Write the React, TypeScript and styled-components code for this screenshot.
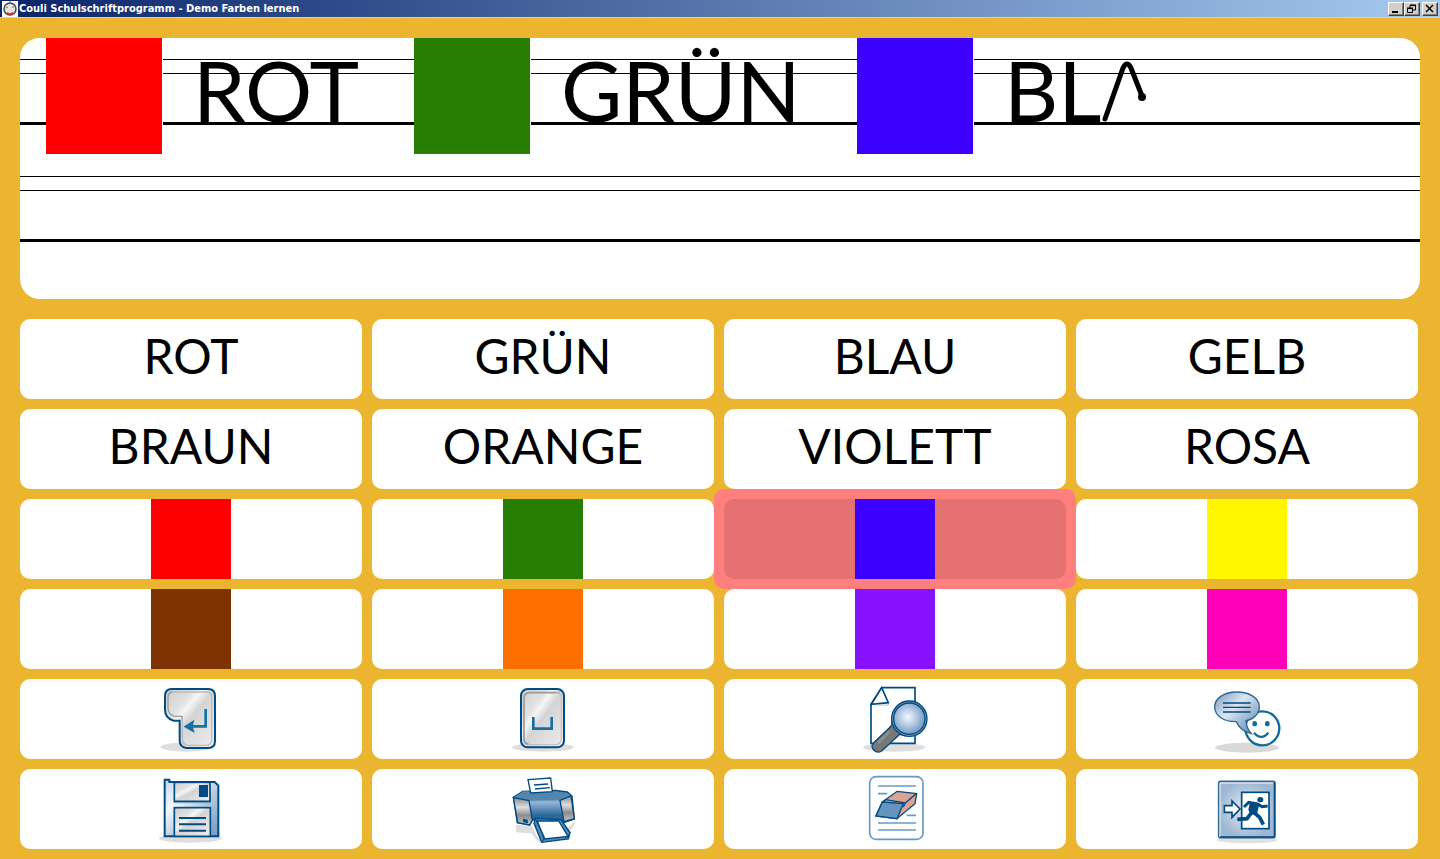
import React from "react";
import styled, { createGlobalStyle, css } from "styled-components";

const GlobalStyle = createGlobalStyle`
  * { box-sizing: border-box; }
  body { margin: 0; background: #ecb530; font-family: Lato, "Liberation Sans", sans-serif; color: #000; }
  button { font: inherit; color: inherit; }
`;

const Window = styled.div`
  min-height: 100vh;
  background: #ecb530;
`;

const TitleBar = styled.header`
  display: flex;
  align-items: center;
  height: 18px;
  padding: 0 2px;
  border-bottom: 1px solid #d4d0c8;
  background: linear-gradient(to right, #0a246a, #a6caf0);
`;

const Title = styled.h1`
  flex: 1;
  margin: 0 0 0 1px;
  font: bold 11px/16px "DejaVu Sans Condensed", "DejaVu Sans", sans-serif;
  color: #fff;
  white-space: nowrap;
`;

const WindowButton = styled.button<{ $apart?: boolean }>`
  display: block;
  width: 16px;
  height: 14px;
  margin: 0 0 0 ${(p) => (p.$apart ? 2 : 0)}px;
  padding: 0;
  border: 1px solid;
  border-color: #fff #404040 #404040 #fff;
  background: #d4d0c8;
  box-shadow: inset -1px -1px 0 #808080;
  svg { display: block; }
`;

const Pad = styled.section`
  height: 261px;
  margin: 20px 20px 0;
  border-radius: 20px;
  background: #fff;
  overflow: hidden;
`;

const RuledLine = styled.div`
  display: flex;
  align-items: flex-start;
  height: 117px;
  padding-left: 26px;
  background: linear-gradient(
    #fff 21px, #000 21px, #000 22px, #fff 22px, #fff 35px,
    #000 35px, #000 36px, #fff 36px, #fff 84px,
    #000 84px, #000 87px, #fff 87px
  );
`;

const PadSwatch = styled.span<{ $color: string }>`
  flex: none;
  width: 117px;
  height: 116px;
  border-right: 1px solid #fff;
  background: ${(p) => p.$color};
`;

const Word = styled.span<{ $width?: number }>`
  display: flex;
  flex: none;
  width: ${(p) => (p.$width ? p.$width + "px" : "auto")};
  padding-left: 30px;
  font-size: 84px;
  line-height: 104px;
  white-space: nowrap;
`;

const PenStroke = styled.svg`
  display: block;
  width: 50px;
  height: 116px;
`;

const Keyboard = styled.main`
  display: grid;
  grid-template-columns: repeat(4, 1fr);
  grid-auto-rows: 80px;
  gap: 10px;
  padding: 20px 22px 10px 20px;
`;

const Key = styled.button<{ $active?: boolean }>`
  display: block;
  padding: 0;
  border: 0;
  border-radius: 10px;
  background: none;
  ${(p) =>
    p.$active &&
    css`
      position: relative;
      margin: -10px;
      padding: 10px;
      background: #ff7f7f;
    `}
`;

const Face = styled.span<{ $active?: boolean }>`
  display: flex;
  align-items: center;
  justify-content: center;
  height: 80px;
  border-radius: 10px;
  background: ${(p) => (p.$active ? "#e57272" : "#fff")};
  overflow: hidden;
`;

const KeyText = styled.span`
  padding-bottom: 6px;
  font-size: 48px;
  line-height: 74px;
`;

const Swatch = styled.span<{ $color: string }>`
  width: 80px;
  height: 80px;
  background: ${(p) => p.$color};
`;

const Art = styled.svg`
  display: block;
  width: 100px;
  height: 80px;
`;

const words = ["ROT", "GRÜN", "BLAU", "GELB", "BRAUN", "ORANGE", "VIOLETT", "ROSA"];

const colors = [
  { name: "Rot", value: "#ff0000" },
  { name: "Grün", value: "#267f00" },
  { name: "Blau", value: "#3b00ff", active: true },
  { name: "Gelb", value: "#fff600" },
  { name: "Braun", value: "#7f3300" },
  { name: "Orange", value: "#ff6f00" },
  { name: "Violett", value: "#8811ff" },
  { name: "Rosa", value: "#ff00b8" },
];

const BLUE = "#004b82";

const EnterIcon = () => (
  <Art viewBox="3 -3 300 240" aria-hidden="true">
    <ellipse cx="141" cy="201" rx="80" ry="14" fill="#dedede" />
    <path d="M93 27H205Q225 27 225 49V183Q225 204 203 204H139Q119 202 119 181V122H101Q75 116 75 88V49Q75 28 93 27Z" fill="url(#metal)" stroke={BLUE} strokeWidth="6" />
    <path d="M126 118V109H104Q85 105 84 84V53Q84 37 98 36" fill="none" stroke="#999" strokeWidth="4" />
    <path d="M98 36H203Q215 38 215 51V180Q213 195 201 196H143Q128 193 127 179V118" fill="none" stroke="#bbb" strokeWidth="4" />
    <path d="M197 87V139H145" fill="none" stroke="#1671a2" strokeWidth="8" />
    <path d="M135 140L160 124L156 139L161 155Z" fill="#1671a2" stroke="#1671a2" strokeWidth="4" />
  </Art>
);

const SpaceIcon = () => (
  <Art viewBox="3 -3 300 240" aria-hidden="true">
    <ellipse cx="153" cy="202" rx="93" ry="13" fill="#dedede" />
    <rect x="87" y="27" width="129" height="175" rx="20" fill="url(#metal)" stroke={BLUE} strokeWidth="6" />
    <path d="M204 38H112Q97 39 96 54V178Q97 191 110 193" fill="none" stroke="#999" strokeWidth="5" />
    <path d="M193 37Q208 38 208 53V176Q206 193 192 194H110" fill="none" stroke="#c3c3c3" strokeWidth="4" />
    <path d="M124 111V146H179V111" fill="none" stroke="#1671a2" strokeWidth="8" />
  </Art>
);

const SearchIcon = () => (
  <Art viewBox="-3 -3 300 240" aria-hidden="true">
    <ellipse cx="145" cy="202" rx="94" ry="13" fill="#dedede" />
    <path d="M107 23H207V190H75V73Z" fill="#fff" stroke={BLUE} strokeWidth="5" />
    <path d="M80 76L130 72L128 78Z" fill="#d4d4d4" />
    <path d="M107 23L127 68L76 73Z" fill="#fff" stroke={BLUE} strokeWidth="5" />
    <path d="M137 137L163 161L107 213Q91 222 80 206Q75 197 83 188Z" fill="#777" stroke={BLUE} strokeWidth="4" />
    <path d="M138 147L96 189" stroke="#8e8e8e" strokeWidth="8" />
    <path d="M140 123Q139 145 124 151Q148 167 166 162L180 168L166 143Z" fill="#777" />
    <path d="M137 118V133L126 150M147 176L161 164L181 167" fill="none" stroke={BLUE} strokeWidth="3" />
    <circle cx="190" cy="116" r="53" fill="#8ba3b6" stroke={BLUE} strokeWidth="4" />
    <circle cx="190" cy="116" r="47" fill="url(#lens)" stroke={BLUE} strokeWidth="4" />
  </Art>
);

const SpeakIcon = () => (
  <Art viewBox="3 -3 300 240" aria-hidden="true">
    <ellipse cx="153" cy="203" rx="96" ry="15" fill="#d9d9d9" />
    <circle cx="199" cy="145" r="51" fill="#fff" stroke="#116b9c" strokeWidth="7" />
    <ellipse cx="176" cy="131" rx="7" ry="8" fill="#116b9c" />
    <ellipse cx="214" cy="131" rx="7" ry="8" fill="#116b9c" />
    <path d="M174 158Q196 183 217 158" fill="none" stroke="#116b9c" strokeWidth="7" />
    <path d="M122 36C160 36 190 54 190 80C190 102 172 118 150 122Q151 144 166 161Q131 151 121 125C84 126 56 107 56 81C56 54 85 36 122 36Z" fill="url(#bubble)" stroke="#2e6891" strokeWidth="4" />
    <path d="M81 69H164M81 82H164M81 96H164" stroke={BLUE} strokeWidth="4" />
  </Art>
);

const SaveIcon = () => (
  <Art viewBox="3 -3 300 240" aria-hidden="true">
    <ellipse cx="151" cy="205" rx="95" ry="13" fill="#dedede" />
    <path d="M74 29H88V36H224L235 47V199H74Z" fill="url(#steel)" stroke={BLUE} strokeWidth="6" />
    <rect x="103" y="37" width="107" height="57" fill="url(#metal)" stroke={BLUE} strokeWidth="5" />
    <rect x="177" y="45" width="27" height="36" fill={BLUE} />
    <rect x="103" y="113" width="108" height="86" fill="url(#metal)" stroke={BLUE} strokeWidth="5" />
    <path d="M117 144H198M117 163H198M117 182H198" stroke={BLUE} strokeWidth="6" />
    <path d="M101 98H213" stroke="#6b9cc0" strokeWidth="3" />
  </Art>
);

const PrintIcon = () => (
  <Art viewBox="3 -3 300 240" aria-hidden="true">
    <path d="M72 164L120 168L134 197L151 219L138 215L118 190L72 187Z" fill="#dedede" />
    <path d="M244 157L251 160L232 186L226 176Z" fill="#dedede" />
    <path d="M64 82L92 64L190 61L226 66L240 78L247 147L218 157L121 149L113 165L76 158Z" fill="url(#body)" stroke={BLUE} strokeWidth="4" />
    <path d="M64 83L93 64L185 63L237 75L204 91L111 92Z" fill="#5286ad" />
    <path d="M108 29L176 24L181 65L116 69Z" fill="#fff" stroke={BLUE} strokeWidth="4" />
    <path d="M126 45L168 42M129 57L174 53" stroke={BLUE} strokeWidth="4" />
    <path d="M64 83L111 92L121 151L113 165L77 158Z" fill="url(#side)" stroke={BLUE} strokeWidth="4" />
    <path d="M204 91L237 78L247 146L216 155Z" fill="url(#side)" stroke={BLUE} strokeWidth="4" />
    <path d="M93 146L107 149L108 160L94 157Z" fill={BLUE} />
    <path d="M129 145L207 149L234 188L229 207L149 217L126 160Z" fill="#5389b5" stroke={BLUE} strokeWidth="4" />
    <path d="M136 153L200 153L228 199L157 207Z" fill="#fff" stroke={BLUE} strokeWidth="4" />
    <path d="M129 145L157 201L151 217M207 149L234 188L225 205" fill="none" stroke={BLUE} strokeWidth="3" />
  </Art>
);

const EraseIcon = () => (
  <Art viewBox="-3 -3 300 240" aria-hidden="true">
    <rect x="71" y="20" width="160" height="188" rx="19" fill="#fff" stroke="#6899c4" strokeWidth="5" />
    <path d="M96 48H210M96 71H124M182 136H210M96 159H210M96 180H210" stroke="#6899c4" strokeWidth="5" />
    <path d="M109 96L153 64L212 71L207 101L153 146L90 138Z" fill="#dfa394" stroke={BLUE} strokeWidth="4" />
    <path d="M109 96L172 101L153 146L90 138Z" fill="#6595bf" stroke={BLUE} strokeWidth="4" />
    <path d="M109 96L119 89L178 99L209 72M178 99L172 111" fill="none" stroke={BLUE} strokeWidth="4" />
  </Art>
);

const ExitIcon = () => (
  <Art viewBox="3 -3 300 240" aria-hidden="true">
    <ellipse cx="154" cy="210" rx="92" ry="10" fill="#e1e1e1" />
    <rect x="68" y="34" width="169" height="169" rx="6" fill="url(#steel2)" stroke="#33688f" strokeWidth="5" />
    <path d="M72 201V39H232" fill="none" stroke="#f4f7fa" strokeWidth="3" />
    <path d="M235 37V201H72" fill="none" stroke={BLUE} strokeWidth="4" />
    <rect x="137" y="67" width="82" height="109" fill="#fff" stroke={BLUE} strokeWidth="5" />
    <path d="M85 107H108V93L132 117L108 142V127H85Z" fill="#fff" stroke={BLUE} strokeWidth="5" />
    <ellipse cx="193" cy="89" rx="9" ry="8" fill={BLUE} />
    <path d="M144 111L158 97L184 102L198 110L215 108" fill="none" stroke={BLUE} strokeWidth="9" />
    <path d="M162 96L190 103L183 132L164 134L157 119Z" fill={BLUE} />
    <path d="M168 126L153 146L124 148M173 127L191 142L202 164" fill="none" stroke={BLUE} strokeWidth="11" />
  </Art>
);

const tools = [
  { label: "Zeilenumbruch", Icon: EnterIcon },
  { label: "Leerzeichen", Icon: SpaceIcon },
  { label: "Vorschau", Icon: SearchIcon },
  { label: "Vorlesen", Icon: SpeakIcon },
  { label: "Speichern", Icon: SaveIcon },
  { label: "Drucken", Icon: PrintIcon },
  { label: "Löschen", Icon: EraseIcon },
  { label: "Beenden", Icon: ExitIcon },
];

const GradientDefs = styled.svg`
  display: block;
  width: 0;
  height: 0;
`;

const Gradients = () => (
  <GradientDefs aria-hidden="true">
    <defs>
      <linearGradient id="metal" x1="0" y1="0" x2="1" y2="1">
        <stop offset="0" stopColor="#cecece" />
        <stop offset="0.3" stopColor="#e2e2e2" />
        <stop offset="0.38" stopColor="#f5f5f5" />
        <stop offset="0.5" stopColor="#d4d4d4" />
        <stop offset="1" stopColor="#eee" />
      </linearGradient>
      <radialGradient id="lens" cx="0.45" cy="0.45">
        <stop offset="0" stopColor="#f4f8fd" />
        <stop offset="0.45" stopColor="#c0d3e8" />
        <stop offset="1" stopColor="#7fa3c9" />
      </radialGradient>
      <linearGradient id="bubble" x1="0" y1="0" x2="1" y2="1">
        <stop offset="0" stopColor="#7396b9" />
        <stop offset="0.4" stopColor="#dce6f2" />
        <stop offset="1" stopColor="#4c7ca8" />
      </linearGradient>
      <linearGradient id="steel" x1="0" y1="0" x2="1" y2="1">
        <stop offset="0" stopColor="#c4d6e9" />
        <stop offset="0.3" stopColor="#f3f7fb" />
        <stop offset="0.6" stopColor="#b2c8de" />
        <stop offset="1" stopColor="#6f99c0" />
      </linearGradient>
      <radialGradient id="steel2">
        <stop offset="0" stopColor="#e4ecf5" />
        <stop offset="1" stopColor="#9fb8d2" />
      </radialGradient>
      <linearGradient id="body" x1="0" y1="0" x2="0" y2="1">
        <stop offset="0" stopColor="#3f79a7" />
        <stop offset="0.35" stopColor="#92b5d3" />
        <stop offset="0.7" stopColor="#2e6c9e" />
        <stop offset="1" stopColor="#1b5b8d" />
      </linearGradient>
      <linearGradient id="side" x1="0" y1="0" x2="0" y2="1">
        <stop offset="0" stopColor="#8a8a8a" />
        <stop offset="0.35" stopColor="#dedede" />
        <stop offset="0.65" stopColor="#8c8c8c" />
        <stop offset="1" stopColor="#c6c6c6" />
      </linearGradient>
    </defs>
  </GradientDefs>
);

const AppLogo = () => (
  <svg width="16" height="16" viewBox="0 0 16 16" aria-hidden="true">
    <path d="M0 0H16V16H0Z" fill="#fff" />
    <circle cx="8" cy="8" r="6" fill="#e5e5e5" stroke="#444" strokeWidth="1.500" />
    <path d="M7 1L9 1M4 7L6 6M10 6L12 6" stroke="#777" />
    <path d="M5 11Q8 13 11 11V13Q8 15 5 13Z" fill="#ef2b20" />
  </svg>
);

export default function App() {
  return (
    <Window>
      <GlobalStyle />
      <Gradients />
      <TitleBar>
        <AppLogo />
        <Title>Couli Schulschriftprogramm - Demo Farben lernen</Title>
        <WindowButton aria-label="Minimieren">
          <svg width="14" height="12"><path d="M3 8H9V10H3Z" /></svg>
        </WindowButton>
        <WindowButton aria-label="Wiederherstellen">
          <svg width="14" height="12" fill="none" stroke="#000">
            <path d="M5 5V2.500H10.500V7H8M5 2H11M2.500 5.500H7.500V9.500H2.500ZM2 5H8" />
          </svg>
        </WindowButton>
        <WindowButton aria-label="Schließen" $apart>
          <svg width="14" height="12"><path d="M3 2L10 9M10 2L3 9" stroke="#000" strokeWidth="1.500" /></svg>
        </WindowButton>
      </TitleBar>

      <Pad aria-label="Schreibfläche">
        <RuledLine>
          <PadSwatch $color="#ff0000" />
          <Word $width={251}>ROT</Word>
          <PadSwatch $color="#267f00" />
          <Word $width={326}>GRÜN</Word>
          <PadSwatch $color="#3b00ff" />
          <Word>BL</Word>
          <PenStroke viewBox="0 0 50 116" aria-hidden="true">
            <path d="M4 81L22 30Q26 22 30 30L41 58" fill="none" stroke="#000" strokeWidth="5" strokeLinecap="round" />
            <circle cx="41" cy="59" r="4" />
          </PenStroke>
        </RuledLine>
        <RuledLine />
      </Pad>

      <Keyboard>
        {words.map((word) => (
          <Key key={word}>
            <Face>
              <KeyText>{word}</KeyText>
            </Face>
          </Key>
        ))}
        {colors.map((color) => (
          <Key key={color.value} aria-label={color.name} $active={color.active}>
            <Face $active={color.active}>
              <Swatch $color={color.value} />
            </Face>
          </Key>
        ))}
        {tools.map(({ label, Icon }) => (
          <Key key={label} aria-label={label}>
            <Face>
              <Icon />
            </Face>
          </Key>
        ))}
      </Keyboard>
    </Window>
  );
}
